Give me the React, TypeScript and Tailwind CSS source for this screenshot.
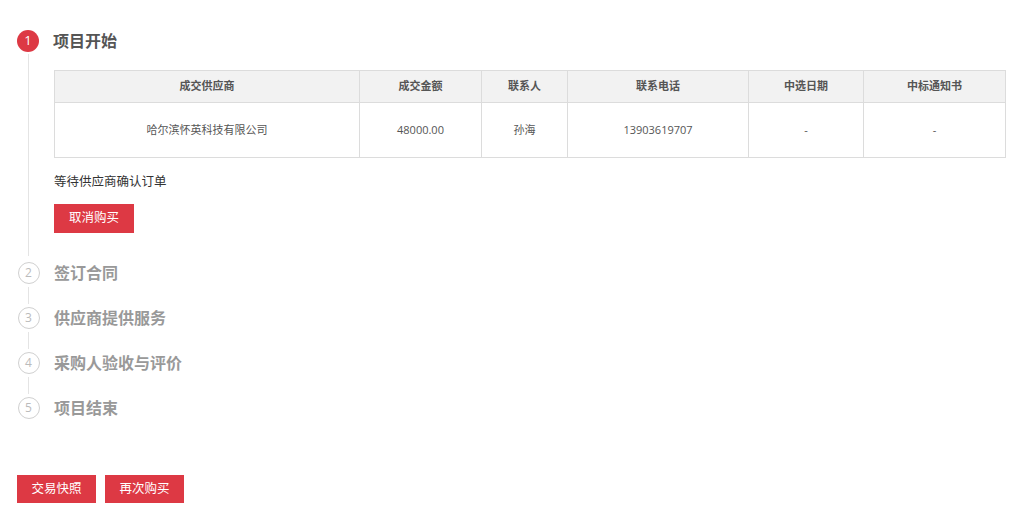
const columns = [
  { title: '成交供应商', width: 305 },
  { title: '成交金额', width: 122 },
  { title: '联系人', width: 86 },
  { title: '联系电话', width: 181 },
  { title: '中选日期', width: 115 },
  { title: '中标通知书', width: 142 },
];

const row = ['哈尔滨怀英科技有限公司', '48000.00', '孙海', '13903619707', '-', '-'];

const pendingSteps = ['签订合同', '供应商提供服务', '采购人验收与评价', '项目结束'];

const App = () => {
  return (
    <div
      className="min-h-[522px] bg-white pl-[17px] pr-[10px] pt-[30px]"
      style={{ fontFamily: '"Open Sans", "Noto Sans CJK SC", sans-serif' }}
    >
      {/* step 1 - active */}
      <div className="flex">
        <div className="flex w-[23px] flex-col items-center">
          <div className="flex h-[22px] w-[22px] items-center justify-center rounded-full bg-[#dd3944] text-[13px] text-white">
            1
          </div>
          <div className="mt-[2px] mb-[6px] w-px flex-1 bg-[#e4e4e4]" />
        </div>
        <div className="ml-[14px] flex-1 pb-[29px]">
          <div className="h-[22px] text-[16px] font-bold leading-[22px] text-[#555]">项目开始</div>
          <table className="mt-[18px] ml-px w-[calc(100%-1px)] table-fixed border-collapse text-[11px] text-[#555]">
            <colgroup>
              {columns.map((c) => (
                <col key={c.title} style={{ width: c.width }} />
              ))}
            </colgroup>
            <thead>
              <tr className="h-[32px] bg-[#f2f2f2]">
                {columns.map((c) => (
                  <th key={c.title} className="border border-[#dcdcdc] font-semibold text-[#555]">
                    {c.title}
                  </th>
                ))}
              </tr>
            </thead>
            <tbody>
              <tr className="h-[55px]">
                {row.map((v, i) => (
                  <td key={i} className="border border-[#dcdcdc] text-center">
                    {v}
                  </td>
                ))}
              </tr>
            </tbody>
          </table>
          <div className="mt-[15px] ml-px text-[12.5px] leading-[18px] text-[#333]">等待供应商确认订单</div>
          <button className="mt-[13px] ml-px h-[29px] w-[80px] bg-[#dd3944] text-[12.5px] text-white">
            取消购买
          </button>
        </div>
      </div>

      {/* remaining steps */}
      {pendingSteps.map((title, i) => (
        <div key={title} className="flex">
          <div className="flex w-[23px] flex-col items-center">
            <div className="flex h-[22px] w-[22px] items-center justify-center rounded-full border border-[#d0d0d0] text-[12px] text-[#bbb]">
              {i + 2}
            </div>
            {i < pendingSteps.length - 1 && <div className="my-[3px] h-[17px] w-px bg-[#e4e4e4]" />}
          </div>
          <div className="ml-[14px] h-[22px] text-[16px] font-bold leading-[22px] text-[#999]">{title}</div>
        </div>
      ))}

      <div className="mt-[56px] flex gap-[9px]">
        <button className="h-[28px] w-[79px] bg-[#dd3944] text-[12.5px] text-white">交易快照</button>
        <button className="h-[28px] w-[79px] bg-[#dd3944] text-[12.5px] text-white">再次购买</button>
      </div>
    </div>
  );
};

export default App;
